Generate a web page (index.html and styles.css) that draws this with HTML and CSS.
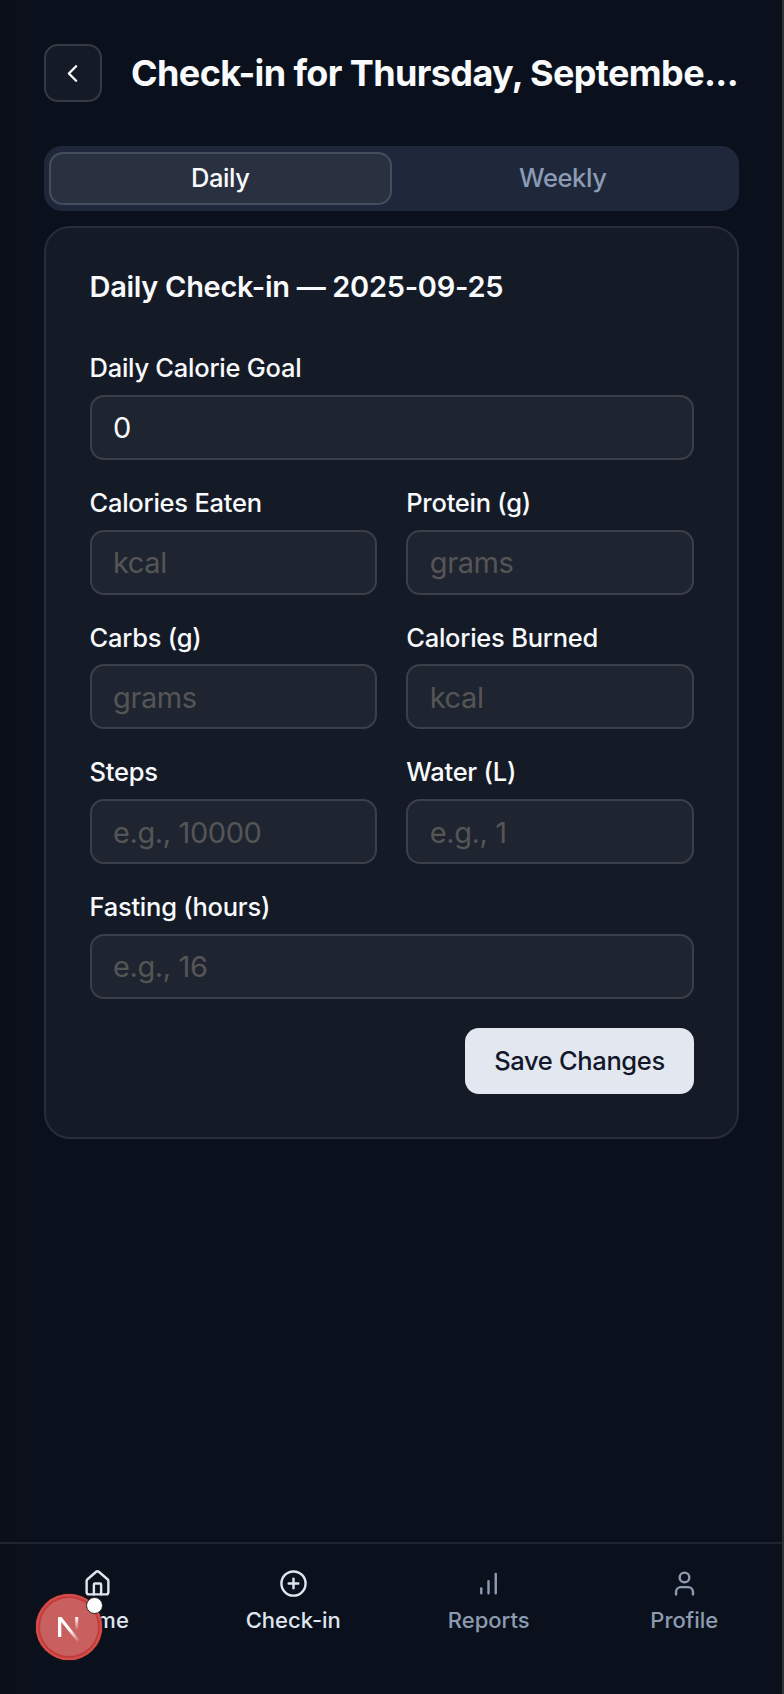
FILE: index.html
```
<!DOCTYPE html>
<html lang="en">
<head>
<meta charset="utf-8">
<title>Daily Check-in</title>
<link rel="stylesheet" href="styles.css">
</head>
<body>
<div class="app">
  <header class="header">
    <button class="back" aria-label="Back"><svg width="29" height="29" viewBox="0 0 24 24"><path d="m15 18-6-6 6-6"/></svg></button>
    <h1 class="title">Check-in for Thursday, Septembe...</h1>
  </header>
  <div class="tabs">
    <button class="tab tab-active"><span>Daily</span></button>
    <button class="tab"><span>Weekly</span></button>
  </div>
  <main class="card">
    <h2 class="card-title">Daily Check-in — 2025-09-25</h2>
    <form class="form">
      <label class="field wide"><span class="label">Daily Calorie Goal</span><input class="input" value="0"></label>
      <label class="field"><span class="label">Calories Eaten</span><input class="input" placeholder="kcal"></label>
      <label class="field"><span class="label">Protein (g)</span><input class="input" placeholder="grams"></label>
      <label class="field"><span class="label">Carbs (g)</span><input class="input" placeholder="grams"></label>
      <label class="field"><span class="label">Calories Burned</span><input class="input" placeholder="kcal"></label>
      <label class="field"><span class="label">Steps</span><input class="input" placeholder="e.g., 10000"></label>
      <label class="field"><span class="label">Water (L)</span><input class="input" placeholder="e.g., 1"></label>
      <label class="field wide"><span class="label">Fasting (hours)</span><input class="input" placeholder="e.g., 16"></label>
      <button class="save" type="button">Save Changes</button>
    </form>
  </main>
  <nav class="nav">
    <a class="nav-item nav-on"><svg width="29" height="29" viewBox="0 0 24 24"><path d="M15 21v-8a1 1 0 0 0-1-1h-4a1 1 0 0 0-1 1v8"/><path d="M3 10a2 2 0 0 1 .709-1.528l7-5.999a2 2 0 0 1 2.582 0l7 5.999A2 2 0 0 1 21 10v9a2 2 0 0 1-2 2H5a2 2 0 0 1-2-2z"/></svg><span>Home</span></a>
    <a class="nav-item nav-on"><svg width="29" height="29" viewBox="0 0 24 24"><circle cx="12" cy="12" r="10"/><path d="M8 12h8M12 8v8"/></svg><span>Check-in</span></a>
    <a class="nav-item"><svg width="29" height="29" viewBox="0 0 24 24"><path d="M12 20V10M18 20V4M6 20v-4"/></svg><span>Reports</span></a>
    <a class="nav-item"><svg width="29" height="29" viewBox="0 0 24 24"><path d="M19 21v-2a4 4 0 0 0-4-4H9a4 4 0 0 0-4 4v2"/><circle cx="12" cy="7" r="4"/></svg><span>Profile</span></a>
  </nav>
  <div class="dev-badge">
    <svg width="66" height="66" viewBox="0 0 66 66">
      <defs>
        <linearGradient id="diag" gradientUnits="userSpaceOnUse" x1="34" y1="36" x2="43" y2="48"><stop stop-color="#fff"/><stop offset="1" stop-color="#fff" stop-opacity="0"/></linearGradient>
        <linearGradient id="stem" gradientUnits="userSpaceOnUse" x1="0" y1="23" x2="0" y2="36"><stop stop-color="#fff"/><stop offset="1" stop-color="#fff" stop-opacity="0"/></linearGradient>
      </defs>
      <path d="M22 43V23h3.500L43.500 46l-2.500 1.500L25.300 28V43z" fill="url(#diag)"/>
      <path d="M39.200 23h3v14h-3z" fill="url(#stem)"/>
    </svg>
    <span class="dev-dot"></span>
  </div>
</div>
</body>
</html>
```
FILE: styles.css
```
* { box-sizing: border-box; }
body { margin: 0; background: #0b111c; font-family: Inter, "Liberation Sans", sans-serif; color: #f8fafc; }
button, input { font: inherit; color: inherit; margin: 0; }
svg { display: block; fill: none; stroke: currentColor; stroke-width: 2; stroke-linecap: round; stroke-linejoin: round; }
.app { position: relative; height: 1694px; display: flex; flex-direction: column; border-right: 2px solid #303132; overflow: hidden; background: linear-gradient(90deg, #0b0f19 0, #0b111c 30px); }
.header { display: flex; align-items: center; gap: 29px; padding: 44px 43px 0 44px; }
.back { flex: none; width: 58px; height: 58px; padding: 0 1px 0 0; display: grid; place-items: center; border: 2px solid #353943; border-radius: 14px; background: #151b26; }
.title { margin: 0; flex: 1; font-size: 36px; line-height: 44px; font-weight: 700; letter-spacing: -0.62px; white-space: nowrap; }
.tabs { margin: 43.500px 43px 0 44px; height: 65.500px; padding: 6.500px 5px 6px 5px; border-radius: 18px; background: #1f283a; display: grid; grid-template-columns: 1fr 1fr; }
.tab { border: 2px solid transparent; border-radius: 14px; padding: 0 0 2px; background: none; color: #8b9bb4; font-size: 25.500px; line-height: 36px; font-weight: 500; letter-spacing: -0.4px; }
.tab-active { background: #293141; border-color: #454e5c; color: #f8fafc; }
.card { margin: 15px 43px 0 44px; height: 913px; padding: 41px 43px 43px 43.500px; border: 2px solid #282d38; border-radius: 26px; background: #151a27; }
.card-title { margin: 0; font-size: 29px; line-height: 36px; font-weight: 600; letter-spacing: -0.3px; }
.form { margin-top: 47px; display: grid; grid-template-columns: 1fr 1fr; column-gap: 29px; row-gap: 27px; }
.field { display: flex; flex-direction: column; gap: 11.250px; min-width: 0; }
.wide { grid-column: 1 / -1; }
.label { font-size: 25.500px; line-height: 31px; height: 31.500px; font-weight: 500; letter-spacing: -0.25px; white-space: nowrap; }
.input { width: 100%; height: 65px; padding: 1px 21.500px 0; border: 2px solid #3b3f49; border-radius: 14px; background: #1f2530; font-size: 29px; letter-spacing: -0.4px; outline: none; }
.input::placeholder { color: #555556; opacity: 1; }
.save { grid-column: 2; justify-self: end; width: 229px; height: 66px; margin-top: 2px; padding: 0; border: 0; border-radius: 14px; background: #e2e7f0; color: #12172a; font-size: 25.500px; font-weight: 500; letter-spacing: -0.35px; }
.nav { margin-top: auto; height: 152px; border-top: 2px solid #20242e; padding-top: 25px; display: grid; grid-template-columns: repeat(4, 1fr); }
.nav-item { display: flex; flex-direction: column; align-items: center; gap: 8px; color: #8d9bb1; font-size: 22px; line-height: 28px; font-weight: 500; letter-spacing: 0; }
.nav-on { color: #dfe5ee; }
.dev-badge { position: absolute; left: 36px; top: 1594px; width: 66px; height: 66px; border-radius: 50%; background: #c96060; box-shadow: inset 0 0 0 2px #d74d4a, inset 0 0 0 4px #c23c3c, 0 0 2px #5b2824; }
.dev-badge svg { stroke: none; }
.dev-dot { position: absolute; left: 50px; top: 3px; width: 17px; height: 17px; border-radius: 50%; background: #fff; border: 1px solid #222; }
```
